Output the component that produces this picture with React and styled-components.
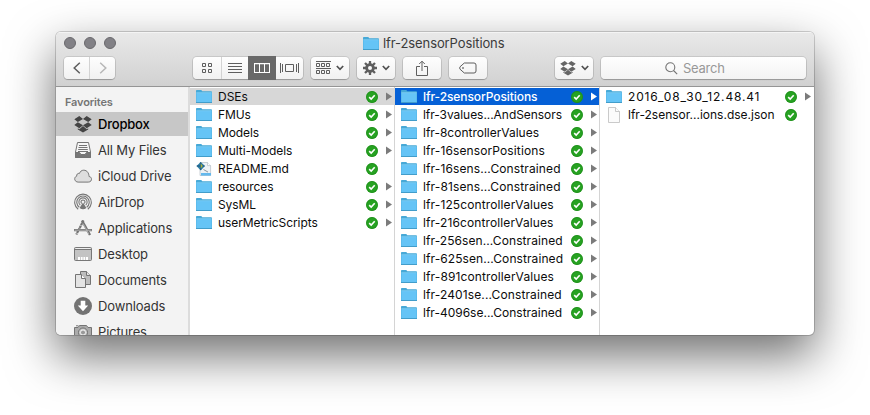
import React from "react";
import styled, { createGlobalStyle, css } from "styled-components";

const Global = createGlobalStyle`
  * { box-sizing: border-box; }
  html, body { margin: 0; background: #fff; }
  body { font-family: Inter, "Liberation Sans", sans-serif; font-size: 13px; color: #141414; overflow: hidden; }
  svg { display: block; flex: none; }
`;

const Desktop = styled.main`
  width: 870px;
  height: 415px;
  padding: 32px 56px 0;
  overflow: hidden;
`;

const Window = styled.section`
  width: 758px;
  height: 303px;
  display: flex;
  flex-direction: column;
  border-radius: 5px;
  overflow: hidden;
  background: #fff;
  box-shadow: 0 0 0 1px rgba(0, 0, 0, 0.17), 0 20px 48px 1px rgba(0, 0, 0, 0.56);
`;

const Header = styled.header`
  height: 55px;
  flex: none;
  background: linear-gradient(#e9e9e9, #d1d1d1);
  border-bottom: 1px solid #959595;
  box-shadow: inset 0 1px 0 #f4f4f4;
`;

const TitleBar = styled.div`
  height: 25px;
  padding: 0 8px;
  display: grid;
  grid-template-columns: 299px 1fr;
  align-items: center;
`;

const Lights = styled.div`
  display: flex;
  gap: 8px;
  margin-top: -3px;
`;

const Light = styled.i`
  width: 12px;
  height: 12px;
  border-radius: 50%;
  background: #828186;
  border: 1px solid #6a696d;
`;

const Title = styled.div`
  display: flex;
  align-items: center;
  gap: 4px;
  margin-top: -2px;
  color: #3b3b3b;
`;

const Toolbar = styled.div`
  display: flex;
  padding: 0 8px;
  height: 22px;
`;

const Group = styled.div`
  display: flex;
  height: 22px;
  margin-right: ${(p) => p.$after}px;
  border-radius: 4px;
  background: linear-gradient(#fefefe, #f1f1f1);
  box-shadow: 0 0 0 1px rgba(0, 0, 0, 0.1), 0 1px 1px rgba(0, 0, 0, 0.2);
`;

const Button = styled.button`
  appearance: none;
  width: ${(p) => p.$w}px;
  height: 22px;
  padding: 0;
  border: 0;
  border-right: ${(p) => (p.$split ? "1px solid #d3d3d3" : "0")};
  background: none;
  color: #5e5e5e;
  display: flex;
  align-items: center;
  justify-content: center;
  gap: 5px;
  ${(p) => p.$active && css`
    height: 24px;
    margin-top: -1px;
    background: #696969;
    color: #fff;
  `}
`;

const Search = styled.div`
  width: 205px;
  height: 22px;
  border-radius: 4px;
  background: linear-gradient(#fefefe, #f3f3f3);
  box-shadow: 0 0 0 1px rgba(0, 0, 0, 0.1), 0 1px 1px rgba(0, 0, 0, 0.2);
  display: flex;
  align-items: center;
  gap: 5px;
  color: #989898;
  padding-left: 64px;
`;

const Body = styled.div`
  flex: 1;
  min-height: 0;
  display: grid;
  grid-template-columns: 134px 205px 205px 1fr;
`;

const Sidebar = styled.nav`
  background: #f3f3f3;
  border-right: 2px solid #dcdcdc;
  overflow: hidden;
  min-height: 0;
`;

const SidebarHeading = styled.div`
  height: 24px;
  padding: 7px 0 0 9px;
  font-size: 11px;
  line-height: 16px;
  font-weight: 600;
  letter-spacing: -0.15px;
  color: #757575;
`;

const Place = styled.div`
  height: 24px;
  margin: 1px 0 2px;
  padding-left: 18px;
  display: flex;
  align-items: center;
  gap: 6px;
  color: ${(p) => (p.$active ? "#000" : "#333")};
  background: ${(p) => (p.$active ? "#c7c7c7" : "transparent")};
`;

const Column = styled.div`
  padding-top: 1px;
  min-width: 0;
  border-right: ${(p) => (p.$last ? "0" : "1px solid #d4d4d4")};
`;

const Item = styled.div`
  height: 17px;
  margin-bottom: 1px;
  padding-left: 6px;
  display: grid;
  grid-template-columns: 16px ${(p) => (p.$wide ? 151 : 142)}px 12px 8px;
  grid-template-rows: 17px;
  column-gap: 6px;
  align-items: center;
  font-size: 12px;
  color: ${(p) => (p.$tone === "blue" ? "#fff" : "#0c0c0c")};
  background: ${(p) => ({ blue: "#0560d6", gray: "#d7d7d7" })[p.$tone] || "transparent"};
`;

const Label = styled.span`
  white-space: nowrap;
  line-height: 17px;
  font-weight: ${(p) => p.$weight || 400};
  letter-spacing: ${(p) => p.$ls || 0}px;
`;

const Folder = () => (
  <svg width="16" height="15" viewBox="0 0 16 15">
    <path d="M0 13V1.8Q0 1 .8 1H5q.6 0 .8.5L6.3 2.3H15q1 0 1 .8V13Z" fill="#47a9d7" />
    <path d="M.3 4H15.7V13H.3Z" fill="#65c4f6" />
    <path d="M.3 3.7H15.7" stroke="#8bd5f8" strokeWidth=".7" />
    <path d="M0 13.5H16" stroke="#429dca" />
  </svg>
);

const PageIcon = () => (
  <svg width="16" height="16" viewBox="0 0 16 16" fill="#fbfbfb" stroke="#bcbcbc" strokeWidth=".8">
    <path d="M2.5.5H9.5L13.5 4.5V15.5H2.5Z" />
    <path d="M9.5.5V4.5H13.5" />
  </svg>
);

const Markdown = () => (
  <svg width="16" height="16" viewBox="0 0 16 16">
    <path d="M4 1.5H11.5L14.6 4.6V14.5H4Z" fill="#eef2f5" stroke="#b5bec5" strokeWidth=".7" />
    <path d="M11.5 1.5V4.6H14.6" fill="#fff" stroke="#b5bec5" strokeWidth=".7" />
    <rect x="5" y="12" width="10" height="2.6" fill="#65b9ed" />
    <path d="M7.5 8.5l4.5 2.6" stroke="#8d9499" />
    <path d="M.5 5L4.7 1 9 5 4.7 9.4Z" fill="#2e7fa6" />
    <path d="M.8 5H8.6M4.7 1.3V9" stroke="#174f79" strokeWidth=".9" />
    <path d="M4.7 2.6L6.8 5 4.7 7.4Z" fill="#b0b53c" />
  </svg>
);

const CheckIcon = styled.svg`
  margin-top: 1px;
`;

const Check = () => (
  <CheckIcon width="12" height="12" viewBox="0 0 12 12">
    <circle cx="6" cy="6" r="5.9" fill="#27a222" />
    <circle cx="6" cy="6" r="5.5" fill="none" stroke="#198615" strokeWidth=".6" />
    <path d="M3.2 6.1L5.2 8 8.7 4.2" fill="none" stroke="#fff" strokeWidth="1.6" />
  </CheckIcon>
);

const ArrowIcon = styled.svg`
  margin-left: 2px;
  margin-top: -1px;
`;

const Arrow = ({ light }) => (
  <ArrowIcon width="6" height="9" viewBox="0 0 6 9">
    <path d="M0 .6L6 4.5 0 8.4Z" fill={light ? "#fff" : "#7b7b7b"} />
  </ArrowIcon>
);

const Chevron = () => (
  <svg width="8" height="6" viewBox="0 0 8 6" fill="none" stroke="#505050" strokeWidth="1.7">
    <path d="M.8 1L4 4.3 7.2 1" />
  </svg>
);

const Dropbox = ({ size = 18, color = "#444" }) => (
  <svg width={size} height={size} viewBox="0 0 18 18" fill={color}>
    <path d="M5.3 1L9 4 3.8 7.1.3 4.2ZM12.7 1L17.7 4.2 14.2 7.1 9 4ZM.3 10L3.8 7.2 9 10.3 5.3 13.3ZM14.2 7.2L17.7 10 12.7 13.3 9 10.3ZM9 11.1L12.8 14.2 14.2 13.3V14.4L9 17.4 3.8 14.4V13.3L5.3 14.2Z" />
  </svg>
);

const placeIcons = {
  dropbox: <Dropbox />,
  files: (
    <svg width="18" height="18" viewBox="0 0 18 18" fill="none" stroke="#747474">
      <path d="M3.5 1.5H14.5L16.5 11V16.5H1.5V11Z" fill="#f6f6f6" />
      <path d="M5 4.5H13M4.5 6.5H13.5M4.2 8.5H13.8M4 10.5H14" />
      <path d="M1.5 11.5H5.5L7 13.5H11L12.5 11.5H16.5V16.5H1.5Z" fill="#777" />
    </svg>
  ),
  cloud: (
    <svg width="18" height="18" viewBox="0 0 18 18">
      <path d="M4.1 15.1H14.2C18.4 15.1 18.6 9.9 15 9.5 15 6.2 13.1 3.2 9.8 3.2 7.5 3.2 6.1 4.5 5.5 6.4 3.5 6 2.4 7.6 2.7 9.2-.1 9.8-.2 14.8 4.1 15.1Z" fill="#dedede" stroke="#787878" />
    </svg>
  ),
  airdrop: (
    <svg width="18" height="18" viewBox="0 0 18 18" fill="none" stroke="#777" strokeWidth="1.1">
      <path d="M4.2 16.2A8.3 8.3 0 1 1 13.8 16.2M5.3 14.2A6.2 6.2 0 1 1 12.7 14.2M6.3 12.1A4.1 4.1 0 1 1 11.7 12.1" />
      <path d="M7.7 10.5A2 2 0 1 1 10.3 10.5" />
      <path d="M9 9.4L12.4 14.9Q9 17.6 5.6 14.9Z" fill="#777" stroke="none" />
    </svg>
  ),
  apps: (
    <svg width="18" height="18" viewBox="0 0 18 18" fill="none" stroke="#747474">
      <path d="M9.5 1.5L2.3 15.5" strokeWidth="2.2" strokeDasharray="2.5 .4" />
      <path d="M8 1.5L16 16" strokeWidth="2.4" />
      <path d="M0 11.2H18" strokeWidth="2.2" />
      <path d="M.5 11.2H17.5" stroke="#c9c9c9" strokeWidth=".7" />
      <path d="M9 4.5L14.8 15" stroke="#d2d2d2" strokeWidth=".6" />
    </svg>
  ),
  desktop: (
    <svg width="18" height="18" viewBox="0 0 18 18">
      <rect x=".5" y="2.5" width="17" height="13" rx="1" fill="#c3c3c3" stroke="#777" />
      <path d="M1.5 3.5H16.5" stroke="#eee" />
      <path d="M1 4.5H17" stroke="#777" />
      <rect x="4" y="12" width="10" height="3" fill="#fff" />
      <path d="M6.5 12V15M9 12V15M11.5 12V15" stroke="#aaa" strokeWidth=".6" />
    </svg>
  ),
  documents: (
    <svg width="18" height="18" viewBox="0 0 18 18" fill="#e3e3e3" stroke="#747474">
      <path d="M6.5.5H12.5L16.5 4.5V13.5H6.5Z" fill="#bdbdbd" />
      <path d="M12.5.5V4.5H16.5" />
      <path d="M1.5 3.5H7.5L11.5 7.5V16.5H1.5Z" />
      <path d="M7.5 3.5V7.5H11.5" fill="#fff" />
    </svg>
  ),
  downloads: (
    <svg width="18" height="18" viewBox="0 0 18 18">
      <circle cx="9" cy="9" r="9" fill="#737373" />
      <path d="M6.7 3.8H11.3V8.4H14.2L9 14.3 3.8 8.4H6.7Z" fill="#fff" />
    </svg>
  ),
  pictures: (
    <svg width="18" height="18" viewBox="0 0 18 18">
      <path d="M.5 4.5H4L5.5 2.5H12.5L14 4.5H17.5V15.5H.5Z" fill="#aaa" stroke="#747474" />
      <path d="M2 2.8H4.5" stroke="#747474" />
      <circle cx="9" cy="9.5" r="4.5" fill="#ccc" stroke="#6e6e6e" />
      <circle cx="9" cy="9.5" r="2.5" fill="#999" stroke="#eee" />
    </svg>
  ),
};

const places = [
  ["dropbox", "Dropbox"], ["files", "All My Files"], ["cloud", "iCloud Drive"],
  ["airdrop", "AirDrop"], ["apps", "Applications"], ["desktop", "Desktop"],
  ["documents", "Documents"], ["downloads", "Downloads"], ["pictures", "Pictures"],
];

const project = [
  { name: "DSEs", tone: "gray" },
  { name: "FMUs", ls: -0.1 },
  { name: "Models", ls: -0.1 },
  { name: "Multi-Models", ls: -0.05 },
  { name: "README.md", kind: "markdown", ls: -0.05 },
  { name: "resources", ls: -0.12 },
  { name: "SysML", ls: -0.1 },
  { name: "userMetricScripts", ls: -0.08 },
];

const experiments = [
  { name: "lfr-2sensorPositions", tone: "blue", ls: -0.08 },
  { name: "lfr-3values...AndSensors", ls: -0.05 },
  { name: "lfr-8controllerValues" },
  { name: "lfr-16sensorPositions", ls: 0.12 },
  { name: "lfr-16sens...Constrained", ls: 0.12 },
  { name: "lfr-81sens...Constrained", ls: 0.12 },
  { name: "lfr-125controllerValues", ls: 0.12 },
  { name: "lfr-216controllerValues", ls: 0.12 },
  { name: "lfr-256sen...Constrained", ls: 0.08 },
  { name: "lfr-625sen...Constrained", ls: 0.08 },
  { name: "lfr-891controllerValues", ls: 0.12 },
  { name: "lfr-2401se...Constrained", ls: 0.12 },
  { name: "lfr-4096se...Constrained" },
];

const results = [
  { name: "2016_08_30_12.48.41", ls: 0.83 },
  { name: "lfr-2sensor...ions.dse.json", kind: "page" },
];

const fileIcons = { markdown: <Markdown />, page: <PageIcon /> };

const FileColumn = ({ items, wide, last }) => (
  <Column $last={last}>
    {items.map((item) => (
      <Item key={item.name} $tone={item.tone} $wide={wide}>
        {fileIcons[item.kind] || <Folder />}
        <Label $ls={item.ls} $weight={item.tone === "blue" ? 500 : 400}>{item.name}</Label>
        <Check />
        {!item.kind && <Arrow light={item.tone === "blue"} />}
      </Item>
    ))}
  </Column>
);

export default function App() {
  return (
    <Desktop>
      <Global />
      <Window>
        <Header>
          <TitleBar>
            <Lights><Light /><Light /><Light /></Lights>
            <Title><Folder /><Label $ls={-0.1}>lfr-2sensorPositions</Label></Title>
          </TitleBar>
          <Toolbar>
            <Group $after={78}>
              <Button $w={26} $split aria-label="Back">
                <svg width="8" height="12" viewBox="0 0 8 12" fill="none" stroke="currentColor" strokeWidth="1.5"><path d="M6.8.7L1.2 6 6.8 11.3" /></svg>
              </Button>
              <Button $w={25} aria-label="Forward">
                <svg width="8" height="12" viewBox="0 0 8 12" fill="none" stroke="#b7b7b7" strokeWidth="1.5"><path d="M1.2.7L6.8 6 1.2 11.3" /></svg>
              </Button>
            </Group>
            <Group $after={8}>
              <Button $w={29} $split aria-label="Icons">
                <svg width="10" height="10" viewBox="0 0 10 10" fill="none" stroke="currentColor"><path d="M.5.5h3v3h-3ZM6.5.5h3v3h-3ZM.5 6.5h3v3h-3ZM6.5 6.5h3v3h-3Z" /></svg>
              </Button>
              <Button $w={26} aria-label="List">
                <svg width="14" height="10" viewBox="0 0 14 10" stroke="currentColor"><path d="M0 .5H14M0 3.5H14M0 6.5H14M0 9.5H14" /></svg>
              </Button>
              <Button $w={28} $active aria-label="Columns">
                <svg width="16" height="10" viewBox="0 0 16 10" fill="none" stroke="currentColor"><rect x=".5" y=".5" width="15" height="9" /><path d="M5.5 0V10M10.5 0V10" /><path d="M0 .5H16" strokeWidth="1.5" /></svg>
              </Button>
              <Button $w={27} aria-label="Cover flow">
                <svg width="19" height="10" viewBox="0 0 19 10" fill="none" stroke="currentColor"><path d="M.5 0V10M2.5 1V9M16.5 1V9M18.5 0V10M5.5 1.5h8v7h-8Z" /></svg>
              </Button>
            </Group>
            <Group $after={8}>
              <Button $w={38} aria-label="Arrange">
                <svg width="15" height="14" viewBox="0 0 15 14" fill="none" stroke="currentColor"><path d="M0 .5H15M0 7.5H15M.5 2.5h3v3h-3ZM5.5 2.5h3v3h-3ZM10.5 2.5h3v3h-3ZM.5 9.5h3v3h-3ZM5.5 9.5h3v3h-3ZM10.5 9.5h3v3h-3Z" /></svg>
                <Chevron />
              </Button>
            </Group>
            <Group $after={8}>
              <Button $w={38} aria-label="Action">
                <svg width="14" height="14" viewBox="0 0 14 14" stroke="currentColor" fill="none"><circle cx="7" cy="7" r="3.4" strokeWidth="2.8" /><path d="M7 0V3M7 11V14M0 7H3M11 7H14M2 2L4.3 4.3M9.7 9.7L12 12M2 12L4.3 9.7M9.7 4.3L12 2" strokeWidth="2.3" /></svg>
                <Chevron />
              </Button>
            </Group>
            <Group $after={8}>
              <Button $w={38} aria-label="Share">
                <svg width="12" height="17" viewBox="0 0 12 17" fill="none" stroke="currentColor"><path d="M4 6.5H.5V15.5H11.5V6.5H8M6 11V1.3M3.2 4L6 1.2 8.8 4" /></svg>
              </Button>
            </Group>
            <Group $after={68}>
              <Button $w={38} aria-label="Tags">
                <svg width="18" height="12" viewBox="0 0 18 12" fill="none" stroke="currentColor"><path d="M5.3 1H15Q17 1 17 3V9Q17 11 15 11H5.3L1 7.2Q.4 6 1 4.8Z" /><circle cx="4" cy="6" r=".5" /></svg>
              </Button>
            </Group>
            <Group $after={8}>
              <Button $w={38} aria-label="Dropbox">
                <Dropbox size={16} color="#656565" />
                <Chevron />
              </Button>
            </Group>
            <Search>
              <svg width="13" height="13" viewBox="0 0 13 13" fill="none" stroke="#747474" strokeWidth="1.1"><circle cx="5.3" cy="5.3" r="4.5" /><path d="M8.5 8.5L12.2 12.2" /></svg>
              <Label $ls={-0.25}>Search</Label>
            </Search>
          </Toolbar>
        </Header>
        <Body>
          <Sidebar>
            <SidebarHeading>Favorites</SidebarHeading>
            {places.map(([icon, name], i) => (
              <Place key={name} $active={i === 0}>
                {placeIcons[icon]}
                <Label $ls={i === 0 ? -0.2 : -0.14} $weight={i === 0 ? 500 : 400}>{name}</Label>
              </Place>
            ))}
          </Sidebar>
          <FileColumn items={project} />
          <FileColumn items={experiments} />
          <FileColumn items={results} wide last />
        </Body>
      </Window>
    </Desktop>
  );
}
